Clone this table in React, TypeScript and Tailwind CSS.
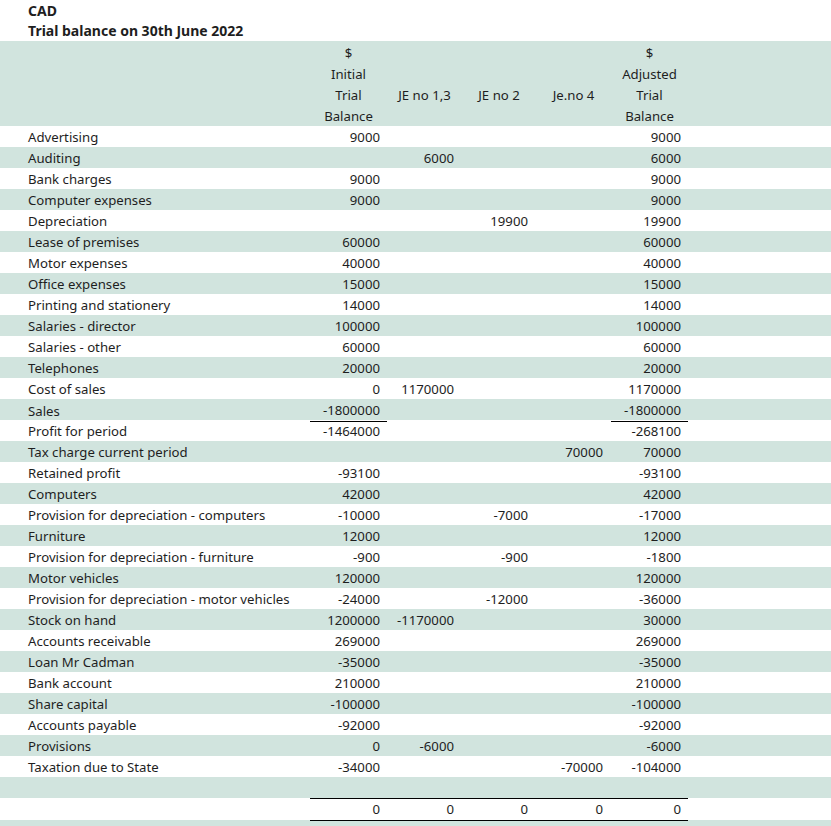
const rows: [string, string, string, string, string, string][] = [
  ['Advertising', '9000', '', '', '', '9000'],
  ['Auditing', '', '6000', '', '', '6000'],
  ['Bank charges', '9000', '', '', '', '9000'],
  ['Computer expenses', '9000', '', '', '', '9000'],
  ['Depreciation', '', '', '19900', '', '19900'],
  ['Lease of premises', '60000', '', '', '', '60000'],
  ['Motor expenses', '40000', '', '', '', '40000'],
  ['Office expenses', '15000', '', '', '', '15000'],
  ['Printing and stationery', '14000', '', '', '', '14000'],
  ['Salaries - director', '100000', '', '', '', '100000'],
  ['Salaries - other', '60000', '', '', '', '60000'],
  ['Telephones', '20000', '', '', '', '20000'],
  ['Cost of sales', '0', '1170000', '', '', '1170000'],
  ['Sales', '-1800000', '', '', '', '-1800000'],
  ['Profit for period', '-1464000', '', '', '', '-268100'],
  ['Tax charge current period', '', '', '', '70000', '70000'],
  ['Retained profit', '-93100', '', '', '', '-93100'],
  ['Computers', '42000', '', '', '', '42000'],
  ['Provision for depreciation - computers', '-10000', '', '-7000', '', '-17000'],
  ['Furniture', '12000', '', '', '', '12000'],
  ['Provision for depreciation - furniture', '-900', '', '-900', '', '-1800'],
  ['Motor vehicles', '120000', '', '', '', '120000'],
  ['Provision for depreciation - motor vehicles', '-24000', '', '-12000', '', '-36000'],
  ['Stock on hand', '1200000', '-1170000', '', '', '30000'],
  ['Accounts receivable', '269000', '', '', '', '269000'],
  ['Loan Mr Cadman', '-35000', '', '', '', '-35000'],
  ['Bank account', '210000', '', '', '', '210000'],
  ['Share capital', '-100000', '', '', '', '-100000'],
  ['Accounts payable', '-92000', '', '', '', '-92000'],
  ['Provisions', '0', '-6000', '', '', '-6000'],
  ['Taxation due to State', '-34000', '', '', '-70000', '-104000'],
];

const grid = 'grid grid-cols-[310px_77px_75px_74px_75px_77px_1fr]';

function Header() {
  const line = (a: string, b: string, c: string, d: string, e: string, key: number) => (
    <div key={key} className={`${grid} h-[21px] items-center`}>
      <div />
      <div className="text-center">{a}</div>
      <div className="text-center">{b}</div>
      <div className="text-center">{c}</div>
      <div className="text-center">{d}</div>
      <div className="text-center">{e}</div>
      <div />
    </div>
  );
  return (
    <div className="bg-[#d1e4de] h-[85px] pt-[2px]">
      {line('$', '', '', '', '$', 0)}
      {line('Initial', '', '', '', 'Adjusted', 1)}
      {line('Trial', 'JE no 1,3', 'JE no 2', 'Je.no 4', 'Trial', 2)}
      {line('Balance', '', '', '', 'Balance', 3)}
    </div>
  );
}

export default function App() {
  return (
    <div
      className="w-[831px] h-[826px] overflow-hidden bg-white text-[13.2px] text-[#1e1e1e]"
      style={{ fontFamily: '"Noto Sans", "Open Sans", sans-serif' }}
    >
      <div className="h-[41px] pl-[28px] pt-[1px] font-bold text-[14px]">
        <div className="h-[20px] leading-[20px]">CAD</div>
        <div className="h-[20px] leading-[20px]">Trial balance on 30th June 2022</div>
      </div>
      <Header />
      {rows.map((r, i) => {
        const underline = r[0] === 'Sales';
        return (
          <div
            key={r[0]}
            className={`${grid} h-[21px] items-center pt-[2px] ${i % 2 === 1 ? 'bg-[#d1e4de]' : 'bg-white'}`}
          >
            <div className="pl-[28px] whitespace-nowrap">{r[0]}</div>
            <div className={`h-full flex items-center justify-end pr-[7px] ${underline ? 'border-b border-black' : ''}`}>{r[1]}</div>
            <div className="text-right pr-[8px]">{r[2]}</div>
            <div className="text-right pr-[8px]">{r[3]}</div>
            <div className="text-right pr-[8px]">{r[4]}</div>
            <div className={`h-full flex items-center justify-end pr-[7px] ${underline ? 'border-b border-black' : ''}`}>{r[5]}</div>
            <div />
          </div>
        );
      })}
      <div className="h-[21px] bg-[#d1e4de]" />
      <div className={`${grid} h-[22px] bg-white`}>
        <div />
        <div className="col-span-5 flex items-center border-y border-black pt-[1px]">
          <div className="w-[77px] text-right pr-[7px]">0</div>
          <div className="w-[75px] text-right pr-[8px]">0</div>
          <div className="w-[74px] text-right pr-[8px]">0</div>
          <div className="w-[75px] text-right pr-[8px]">0</div>
          <div className="w-[77px] text-right pr-[7px]">0</div>
        </div>
        <div />
      </div>
      <div className="h-[20px] bg-[#d1e4de]" />
    </div>
  );
}
